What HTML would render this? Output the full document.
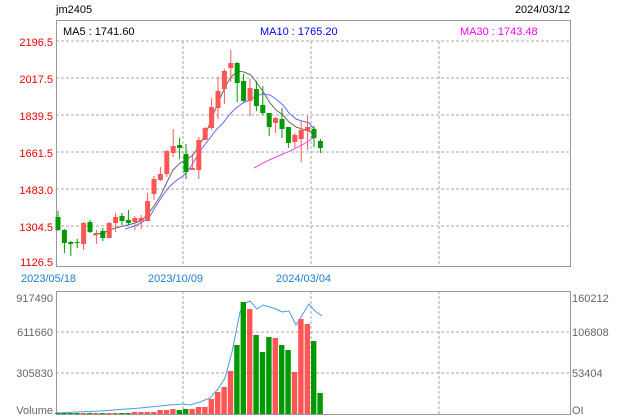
<!DOCTYPE html><html><head><meta charset="utf-8"><style>
body{margin:0;background:#fff;width:620px;height:420px;overflow:hidden}
svg{display:block;font-family:"Liberation Sans",sans-serif;font-size:11px}
</style></head><body>
<svg id="s" width="620" height="420" xmlns="http://www.w3.org/2000/svg">
<text x="56" y="13" fill="#000">jm2405</text>
<text x="570" y="13" fill="#000" text-anchor="end">2024/03/12</text>
<g stroke="#aaa" stroke-dasharray="3,2" fill="none">
<path d="M56 41H570M56 78H570M56 115H570M56 152H570M56 189H570M56 226H570M183 41V266M311 41V266M439 41V266"/>
<path d="M56 332H570M56 373H570M183 291V414M311 291V414M439 291V414"/>
</g>
<rect x="56.5" y="20.5" width="514" height="246" fill="none" stroke="#999"/>
<rect x="56.5" y="291.5" width="514" height="123" fill="none" stroke="#999"/>
<text x="63" y="35" fill="#000">MA5 : 1741.60</text>
<text x="260" y="35" fill="#00f">MA10 : 1765.20</text>
<text x="460" y="35" fill="#f0f">MA30 : 1743.48</text>
<g fill="#e00" text-anchor="end">
<text x="53" y="46">2196.5</text><text x="53" y="83">2017.5</text><text x="53" y="120">1839.5</text>
<text x="53" y="157">1661.5</text><text x="53" y="194">1483.0</text><text x="53" y="231">1304.5</text><text x="53" y="266">1126.5</text>
</g>
<g fill="#1a7fd4">
<text x="21" y="282">2023/05/18</text><text x="148" y="282">2023/10/09</text><text x="276" y="282">2024/03/04</text>
</g>
<g fill="#666">
<text x="53" y="302" text-anchor="end">917490</text><text x="53" y="336" text-anchor="end">611660</text>
<text x="53" y="377" text-anchor="end">305830</text><text x="53" y="414" text-anchor="end">Volume</text>
<text x="572" y="302">160212</text><text x="572" y="336">106808</text><text x="572" y="377">53404</text><text x="572" y="414">OI</text>
</g>
<polyline fill="none" stroke="#666" stroke-width="1" points="93,235 103,233 115,228 128,225 141,221 148,214 154,206 161,195 167,182 173,170 180,163 186,160 193,155 199,146 206,133 212,118 218,103 225,87 231,77 238,71 244,72 251,75 257,83 264,93 270,103 276,110 283,115 289,122 296,127 302,129 309,131 315,134"/>
<polyline fill="none" stroke="#66f" stroke-width="1" points="125,229 135,226 143,222 150,216 156,206 163,195 170,186 177,180 183,176 190,168 196,158 203,147 210,138 216,130 223,123 230,114 236,108 243,103 250,100 256,96 262,94 270,95 276,99 283,105 289,113 296,119 302,121 309,123 315,130"/>
<polyline fill="none" stroke="#f4f" stroke-width="1" points="254,168 265,162 276,157 290,151 302,145 315,137"/>
<polyline fill="none" stroke="#4a9be8" stroke-width="1" points="56,413 100,411 140,408 160,406 170,405 183,404 190,405 200,402 210,398 218,389 225,378 232,352 240,312 245,303 250,301 257,309 263,305 270,307 276,309 282,312 289,311 296,325 301,317 309,304 315,311 322,316"/>
<g id="c"></g>
</svg>
<script>
var R="#f55",G="#090";
var c=[[217,230,211,231,G],[230,243,229,253,G],[242,244,241,256,G],[242,243,239,248,G],[223,244,222,250,R],[222,232,220,233,G],[233,234,230,244,R],[231,238,228,241,G],[223,238,222,238,R],[217,223,213,232,R],[216,221,213,225,G],[220,223,210,225,G],[218,222,216,230,R],[218,221,215,229,R],
[201,221,193,221,R],[179,194,176,200,R],[174,180,167,181,R],[151,174,150,177,R],[146,153,129,157,R],[145,148,138,159,G],[154,172,144,179,G],[168,170,154,170,R],[140,170,137,179,R],[128,140,127,140,R],[107,128,98,130,R],[91,108,77,119,R],[71,89,69,104,R],[63,68,50,82,R],[63,83,62,102,G],[81,101,74,102,G],[88,101,79,116,R],[89,106,81,111,G],[105,113,86,115,G],[113,127,113,136,G],[118,123,117,133,R],[119,129,108,138,G],[127,143,127,148,G],[135,142,133,148,R],[130,139,121,162,R],[127,131,116,150,R],[129,138,126,147,G],[141,148,139,153,G]];
var v=[413,413,413,413,413,413,413,413,413,413,413,413,412,412,412,412,410,410,409,410,409,409,407,407,399,392,387,371,345,302,309,335,352,337,338,345,350,372,319,324,341,393];
var h="";
for(var i=0;i<42;i++){var x=58+i*6.4,d=c[i];
h+='<line x1="'+x+'" x2="'+x+'" y1="'+d[2]+'" y2="'+d[3]+'" stroke="'+d[4]+'"/>';
h+='<rect x="'+(x-2.5)+'" y="'+d[0]+'" width="5" height="'+Math.max(1,d[1]-d[0])+'" fill="'+d[4]+'"/>';
h+='<rect x="'+(x-3)+'" y="'+v[i]+'" width="5.4" height="'+(414-v[i])+'" fill="'+d[4]+'"/>';}
document.getElementById("c").innerHTML=h;
</script>
</body></html>
